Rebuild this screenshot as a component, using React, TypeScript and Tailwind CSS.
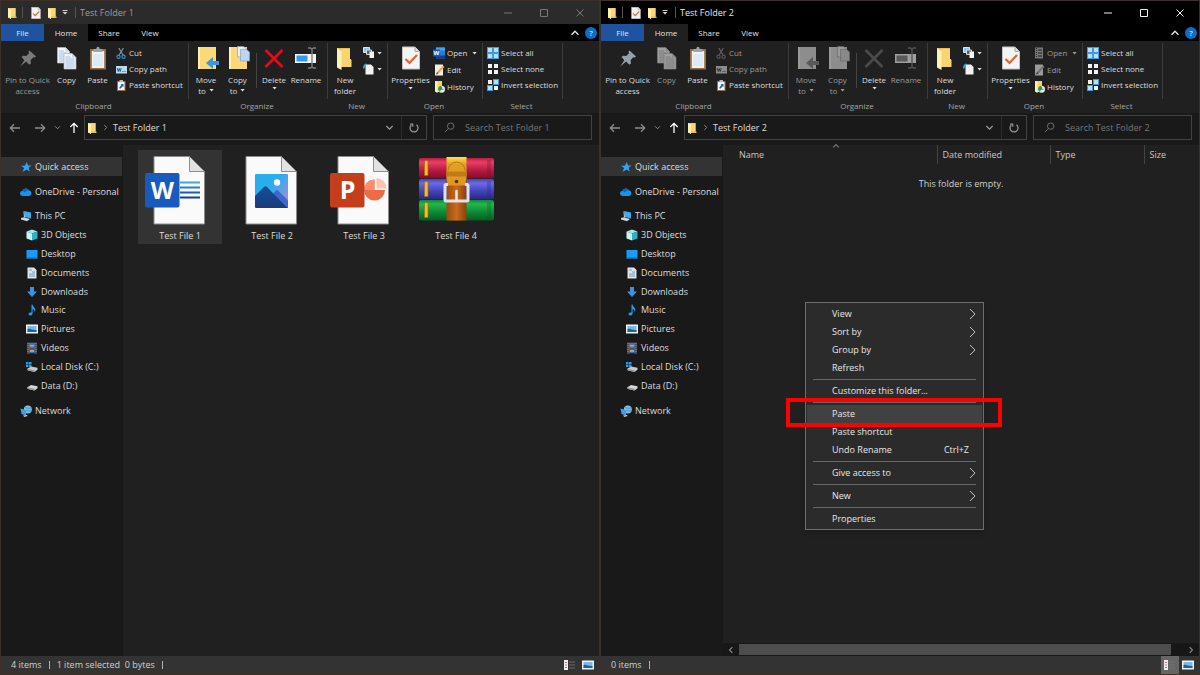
import { ReactNode } from 'react';
import clsx from 'clsx';

interface IconProps {
  className?: string;
}

interface ExplorerProps {
  title: string;
  active: boolean;
  hasSelection: boolean;
  status: string[];
  children: ReactNode;
}

/* ---------- Small icons ---------- */

const FolderIcon = ({ className = 'w-[10px] h-[12px]' }: IconProps) => (
  <svg viewBox="0 0 10 12" className={className}>
    <path d="M1 1h7.500v8.500h1V11H3.500L1 10.500z" fill="#e9bf55" />
    <path d="M1 1l3 1.200V12L1 10.600z" fill="#fff0b0" />
    <path d="M4 1.200h4.500v8.300H4z" fill="#fbd877" />
  </svg>
);

const CheckPageIcon = ({ className = 'w-[10px] h-[12px]' }: IconProps) => (
  <svg viewBox="0 0 18 23" className={className}>
    <path d="M.5.5H13l4.500 4.500v17.500H.5z" fill="#f4f4f4" stroke="#c4c4c4" />
    <path d="M13 .5V5h4.500" fill="#d8d8d8" stroke="#a8a8a8" />
    <path d="M3.500 12.500l4 4 7.500-8" fill="none" stroke="#e8632c" strokeWidth="2.200" />
  </svg>
);

const Caret = ({ className = '' }: IconProps) => (
  <svg viewBox="0 0 5 3" className={clsx('w-[5px] h-[3px] shrink-0', className)}>
    <path d="M.5 0h4.200L2.600 2.600z" fill="currentColor" />
  </svg>
);

const Chevron = ({ className = 'w-[10px] h-[10px]' }: IconProps) => (
  <svg viewBox="0 0 10 10" className={clsx('shrink-0', className)}>
    <path d="M1.500 3.300L5 6.800l3.500-3.500" fill="none" stroke="currentColor" strokeWidth="1.400" />
  </svg>
);

const ArrowIcon = ({ className = '' }: IconProps) => (
  <svg viewBox="0 0 12 12" className={clsx('w-[12px] h-[12px] shrink-0', className)}>
    <path d="M11 6H1.500M5 2.300L1.300 6 5 9.700" fill="none" stroke="currentColor" strokeWidth="1.300" />
  </svg>
);

/* ---------- Ribbon icons, large ---------- */

const PinIcon = () => (
  <svg viewBox="0 0 18 24" className="w-[18px] h-[24px]">
    <path d="M10.500 4.500l6.500 6-1.800 1.200-1-.4-2.600 3 .3 3.200-1.600 1.200-3.200-3.200L1.300 20.500l4-6.200L2.500 11l1.700-1.200 3 .2 3-2.900-.9-1z" fill="currentColor" />
  </svg>
);

const Sheet = ({ x, y }: { x: number; y: number }) => (
  <g transform={`translate(${x} ${y})`}>
    <path d="M.5.5h8l4 4v11.500H.5z" fill="#f2f5fa" stroke="#b4bac4" strokeWidth=".7" />
    <path d="M8.500.5v4h4" fill="#cfd6e2" />
    <path d="M2 6h9M2 8h9M2 10h9M2 12h9M2 14h9M2 4h5" stroke="#8fb4e0" strokeWidth=".8" />
  </g>
);

const CopyIcon = () => (
  <svg viewBox="0 0 20 24" className="w-[20px] h-[24px]">
    <Sheet x={0} y={1} />
    <Sheet x={6.500} y={7} />
  </svg>
);

const PasteIcon = () => (
  <svg viewBox="0 0 18 24" className="w-[18px] h-[24px]">
    <path d="M1 3h16v20.500H1z" fill="#9a6b40" />
    <path d="M2.800 5h12.400v17H2.800z" fill="#eef3f8" />
    <path d="M4 9h10M4 11h10M4 13h10M4 15h10M4 17h10M4 19h10" stroke="#c7dbef" strokeWidth=".8" />
    <path d="M4.500 3h2.700L8 1h2l.8 2h2.700v3h-9z" fill="#9fa4a8" />
  </svg>
);

const MoveToIcon = () => (
  <svg viewBox="-4 0 25 24" className="w-[25px] h-[24px]">
    <path d="M0 1h18v22H0z" fill="#fcd978" />
    <path d="M0 1h2v22H0z" fill="#fff0b4" />
    <path d="M21 15v4h-6v4l-7-6 7-6v4z" fill="#3a97e4" />
  </svg>
);

const CopyToIcon = () => (
  <svg viewBox="-4 0 25 24" className="w-[25px] h-[24px]">
    <path d="M0 1h18v22H0z" fill="#fcd978" />
    <path d="M0 1h2v22H0z" fill="#fff0b4" />
    <path d="M8.500.4h6l3 2.600v8h-9z" fill="#e8f0fa" stroke="#8ea0b8" strokeWidth=".7" />
    <path d="M11.500 3.400h6l3 2.600v9h-9z" fill="#bcd6f6" stroke="#8ea0b8" strokeWidth=".7" />
  </svg>
);

const DeleteIcon = () => (
  <svg viewBox="0 0 20 24" className="w-[20px] h-[24px]">
    <path d="M1.500 4l17 17M18.500 4l-17 17" stroke="currentColor" strokeWidth="2.800" />
  </svg>
);

const RenameIcon = () => (
  <svg viewBox="0 0 24 24" className="w-[24px] h-[24px]">
    <path d="M1 8h21v9H1z" fill="#f3f3f3" />
    <path d="M2.500 9.500h11v6h-11z" fill="#3399ea" />
    <path d="M14 2h2.500l1.500 1 1.500-1H22M18 3v18M14 22h2.500l1.500-1 1.500 1H22" fill="none" stroke="#808080" strokeWidth="1.400" />
  </svg>
);

const NewFolderIcon = () => (
  <svg viewBox="0 0 16 24" className="w-[16px] h-[24px]">
    <path d="M0 2h13v11h1v8H5l-4 1z" fill="#e8bd58" />
    <path d="M4 3h9v10l1.500 1v7H4z" fill="#fad471" />
    <path d="M0 2l4.500 3v19L0 21.500z" fill="#fff0b4" />
  </svg>
);

/* ---------- Ribbon icons, small ---------- */

const small = 'w-[11px] h-[11px] shrink-0';

const CutIcon = () => (
  <svg viewBox="0 0 11 11" className={small}>
    <path d="M2.800 0l4.500 7.500M7.400 0L2.900 7.500" stroke="#8b98a4" strokeWidth="1.100" />
    <circle cx="2.500" cy="8.800" r="1.600" fill="none" stroke="#2b8fd6" strokeWidth="1.200" />
    <circle cx="7.600" cy="8.800" r="1.600" fill="none" stroke="#2b8fd6" strokeWidth="1.200" />
  </svg>
);

const CopyPathIcon = () => (
  <svg viewBox="0 0 11 11" className={small}>
    <path d="M0 2h11v7.500H0z" fill="#b6dcf6" />
    <path d="M1.200 4l1 3.500 1-3 1 3 1-3.500M6.500 7.500h1M8.500 7.500h1" fill="none" stroke="#20506e" strokeWidth=".9" />
  </svg>
);

const PasteShortcutIcon = () => (
  <svg viewBox="0 0 11 11" className={small}>
    <path d="M1 1h8.500v10H1z" fill="#9a6b40" />
    <path d="M2 2h6.500v8H2z" fill="#f5f8fb" />
    <path d="M3.500 0H7v2H3.500z" fill="#b5b9bd" />
    <path d="M3.500 8.500V7l2-2-.8-.9h2.800V7l-.8-.7-2 2.200z" fill="#2563b0" />
  </svg>
);

const EasyAccessIcon = () => (
  <svg viewBox="0 0 12 12" className="w-[12px] h-[12px] shrink-0">
    <path d="M.5.5h6v5h-6z" fill="#8bc4ee" stroke="#d5e7f5" />
    <path d="M3.500 3h5v4.500h-5z" fill="#55616e" stroke="#d8dde2" />
    <path d="M6.500 4.500H11V11H6.500z" fill="#f4f6f8" />
  </svg>
);

const NewItemIcon = () => (
  <svg viewBox="0 0 12 12" className="w-[12px] h-[12px] shrink-0">
    <path d="M2.500 1.500H8L10.500 4v7.500h-8z" fill="#f2f2f2" />
    <path d="M0 5.500c0-3 1-4.500 3.500-5l.5 1.300C2.500 2.500 1.700 3.500 1.700 5.500z" fill="#469de0" />
  </svg>
);

const WordSmallIcon = () => (
  <svg viewBox="0 0 12 12" className="w-[12px] h-[12px] shrink-0">
    <path d="M3 .5h9v11H3z" fill="#2b7cd3" />
    <path d="M3 .5h9v3H3z" fill="#41a5ee" />
    <path d="M3 8.500h9v3H3z" fill="#103f91" />
    <path d="M0 2.500h7v7H0z" fill="#185abd" />
    <text x="3.500" y="8.200" fontSize="6" fontWeight="700" textAnchor="middle" fill="#fff">W</text>
  </svg>
);

const GenericOpenIcon = () => (
  <svg viewBox="0 0 12 12" className="w-[12px] h-[12px] shrink-0">
    <path d="M2 .5h8v11H2z" fill="#b8b8b8" />
    <path d="M3.500 1v10.500" stroke="#333" strokeDasharray="1 1" />
    <path d="M5 2h4v2H5zM5 5h4v2H5zM5 8h4v2H5z" fill="#707070" />
  </svg>
);

const EditIcon = () => (
  <svg viewBox="0 0 12 12" className="w-[12px] h-[12px] shrink-0">
    <path d="M2 .5h8v11H2z" fill="#eeeeee" />
    <path d="M3 10.500L4 8l6-6.500L11.500 3l-6 6.500z" fill="#e8ad36" />
    <path d="M3 10.500L4 8l1.500 1.500z" fill="#555" />
  </svg>
);

const HistoryIcon = () => (
  <svg viewBox="0 0 12 12" className="w-[12px] h-[12px] shrink-0">
    <path d="M2 0h7v11H4l-2-1z" fill="#f7d36e" />
    <path d="M2 0l2.500 1v11L2 10.500z" fill="#fff0b4" />
    <circle cx="8.500" cy="8.300" r="3.500" fill="#e5e9e5" />
    <path d="M5 8.300a3.500 3.500 0 013.500-3.500v3.500L6.500 11z" fill="#3a9b45" />
    <path d="M8.500 6v2.300h2" fill="none" stroke="#4a5a4a" strokeWidth=".7" />
  </svg>
);

const SelectIcon = ({ on }: { on: boolean[] }) => (
  <svg viewBox="0 0 12 12" className="w-[12px] h-[12px] shrink-0">
    {on.map((lit, i) => (
      <g key={i} transform={`translate(${(i % 2) * 6} ${Math.floor(i / 2) * 6})`}>
        {lit && <rect width="6" height="6" fill="#3d9be0" />}
        <rect x="1" y="1" width="4" height="4" fill={lit ? '#b9def8' : '#f2f2f2'} />
      </g>
    ))}
  </svg>
);

/* ---------- Navigation pane icons ---------- */

const nav = 'w-[12px] h-[12px] shrink-0';

const navIcons: Record<string, ReactNode> = {
  star: (
    <svg viewBox="0 0 12 12" className={nav}>
      <path d="M6.800 1l1.200 3.600h3.500L8.700 6.800l1 3.700-3.200-2.100L2.500 11l1.600-4L1 4.800l3.900-.1z" fill="#36a3f0" />
    </svg>
  ),
  cloud: (
    <svg viewBox="0 0 12 12" className={nav}>
      <path d="M2.600 10a2.500 2.500 0 01-.2-5A3.700 3.700 0 019 4.200 3 3 0 019.400 10z" fill="#1a94e6" />
      <path d="M2.400 5A3.700 3.700 0 019 4.200Q6 4.500 4.800 6.500 4 5 2.400 5z" fill="#0d66b8" />
    </svg>
  ),
  pc: (
    <svg viewBox="0 0 12 12" className={nav}>
      <path d="M4 1l7 1.500v6L5 7z" fill="#3fa9f2" />
      <path d="M4 1l1 6-1 .8L3.500 2z" fill="#b9dff8" />
      <path d="M1 8l3-.8 6 1.800-3 2.200L1 9.500z" fill="#cdd3d8" />
    </svg>
  ),
  cube: (
    <svg viewBox="0 0 12 12" className={nav}>
      <path d="M6 .5l5.500 2L6 4.500.5 2.500z" fill="#9ceaf0" />
      <path d="M.5 2.500L6 4.500v7L.5 9.500z" fill="#c7f4f5" />
      <path d="M11.500 2.500L6 4.500v7l5.500-2z" fill="#2bb3c6" />
    </svg>
  ),
  desktop: (
    <svg viewBox="0 0 12 12" className={nav}>
      <path d="M.5 2h11v8.500H.5z" fill="#1b9bf5" />
      <path d="M.5 9.500h11v1H.5z" fill="#0b6fc0" />
    </svg>
  ),
  doc: (
    <svg viewBox="0 0 12 12" className={nav}>
      <path d="M1.500.5H8L10.500 3v8.500h-9z" fill="#dfe4e8" />
      <path d="M3 3h3M6 5h3M3 7h6M3 9h6" stroke="#5f9ccc" strokeWidth=".9" />
    </svg>
  ),
  down: (
    <svg viewBox="0 0 12 12" className={nav}>
      <path d="M4 1h4v4.500h3L6 11 1 5.500h3z" fill="#3a93e2" />
    </svg>
  ),
  music: (
    <svg viewBox="0 0 12 12" className={nav}>
      <path d="M5.500.5h1c.2 2 2.700 2.700 2.700 5.200 0 .9-.3 1.600-.8 2.200C8.700 6.200 7.600 5.200 6.600 4.900v4.600c0 1.200-1 2-2.300 2-1 0-1.800-.5-1.800-1.400C2.500 8.800 4 8.300 5.500 8.600z" fill="#1f9df0" />
    </svg>
  ),
  picture: (
    <svg viewBox="0 0 12 12" className={nav}>
      <path d="M0 1.500h12v9H0z" fill="#eef2f5" />
      <path d="M1.500 3h9v6h-9z" fill="#79b9ec" />
      <path d="M1.500 6c3-1 5 1.500 9 1v2h-9z" fill="#25628c" />
    </svg>
  ),
  video: (
    <svg viewBox="0 0 12 12" className={nav}>
      <path d="M1 .5h10v11H1z" fill="#4c4c50" />
      <path d="M3 1h6v4.700H3z" fill="#3f6fd0" />
      <path d="M3 6.300h6V11H3z" fill="#3862ba" />
      <path d="M4 3h4v1.700H4zM4 8h4v2H4z" fill="#d69b43" />
      <path d="M2 1v10.500M10 1v10.500" stroke="#aaa" strokeWidth=".8" strokeDasharray="1 1" />
    </svg>
  ),
  diskC: (
    <svg viewBox="0 0 12 12" className={nav}>
      <path d="M0 1h2.500v2.200H0zM3 1h2.500v2.200H3zM0 3.700h2.500v2.200H0zM3 3.700h2.500v2.200H3z" fill="#1ea0ea" />
      <path d="M1 8l4-2.500 6.500 1.300v2L8.500 11 2 9.600z" fill="#c7cacc" />
      <path d="M1 8l7.500 1.300V11L2 9.600z" fill="#8f9395" />
    </svg>
  ),
  disk: (
    <svg viewBox="0 0 12 12" className={nav}>
      <path d="M1 7.500L5 5l6.500 1.300v2L8.500 10.500 2 9.100z" fill="#d2d4d6" />
      <path d="M1 7.500l7.500 1.300v1.700L2 9.100z" fill="#8f9395" />
    </svg>
  ),
  network: (
    <svg viewBox="0 0 12 12" className={nav}>
      <circle cx="7.800" cy="4.500" r="4" fill="#7fc0e6" />
      <path d="M5 2c2 2 4 1 6 1M4.500 6c2-1 5 1 6.800-.5" fill="none" stroke="#3c85b5" strokeWidth=".8" />
      <path d="M.5 3.500L6 5v5.500L1.500 9z" fill="#37a3ee" />
      <path d="M3 10.500l4-.5.500 1-3 1z" fill="#c5cbd0" />
    </svg>
  ),
};

/* ---------- File thumbnails ---------- */

const Page = () => (
  <>
    <path d="M16 6.500h35.500l15 15v52.500H16z" fill="#fafafa" stroke="#8c8c8c" />
    <path d="M51.500 6.500v15h15z" fill="#e2e2e2" stroke="#8c8c8c" />
  </>
);

const thumb = 'w-[84px] h-[76px]';

const WordFile = () => (
  <svg viewBox="0 0 84 76" className={thumb}>
    <Page />
    <path d="M42 32.500h20" stroke="#41a5ee" strokeWidth="2" />
    <path d="M42 37.500h20" stroke="#2b7cd3" strokeWidth="2" />
    <path d="M42 42.500h20" stroke="#185abd" strokeWidth="2" />
    <path d="M42 47.500h20" stroke="#103f91" strokeWidth="2" />
    <rect x="7" y="23" width="34.500" height="34.500" rx="2" fill="#185abd" />
    <text x="24.300" y="49.300" fontSize="24" fontWeight="700" textAnchor="middle" fill="#fff">W</text>
  </svg>
);

const PictureFile = () => (
  <svg viewBox="0 0 84 76" className={thumb}>
    <defs>
      <linearGradient id="sky" x1="0" y1="0" x2="1" y2="1">
        <stop offset=".4" stopColor="#28aeea" />
        <stop offset=".9" stopColor="#a78be0" />
      </linearGradient>
      <linearGradient id="hill" x1="0" y1="0" x2="0" y2="1">
        <stop offset="0" stopColor="#11509a" />
        <stop offset="1" stopColor="#1c3a78" />
      </linearGradient>
    </defs>
    <Page />
    <rect x="25" y="24" width="33" height="34" rx="1" fill="url(#sky)" />
    <path d="M40 47l6-6.500q1-1 2 0l10 10v7.500H42z" fill="#3e68cc" />
    <path d="M25 46l9-9q1.500-1.500 3 0l20.500 21H26l-1-1z" fill="url(#hill)" />
    <circle cx="47" cy="32.500" r="3.200" fill="#fff" />
  </svg>
);

const SlidesFile = () => (
  <svg viewBox="0 0 84 76" className={thumb}>
    <Page />
    <path d="M52.500 29.500v10.500h10.500A10.500 10.500 0 1152.500 29.500z" fill="#ed6c47" />
    <path d="M52.500 29.500v10.500H42a10.500 10.500 0 0110.500-10.500z" fill="#ff8f6b" />
    <path d="M54.500 28a10.500 10.500 0 0110 10.500h-10z" fill="#ffc2b0" />
    <rect x="8" y="23" width="34.500" height="34.500" rx="2" fill="#c43e1c" />
    <text x="25.500" y="49.300" fontSize="25" fontWeight="700" textAnchor="middle" fill="#fff">P</text>
  </svg>
);

const books = [
  { y: 8, id: 'red', top: '#ea3f66', mid: '#b81a40', low: '#7a0f2b' },
  { y: 29, id: 'blue', top: '#6a6ae6', mid: '#4343b8', low: '#28287c' },
  { y: 50, id: 'green', top: '#25b64b', mid: '#0e8a34', low: '#075c22' },
];

const ArchiveFile = () => (
  <svg viewBox="0 0 84 76" className={thumb}>
    <defs>
      {books.map((b) => (
        <linearGradient key={b.id} id={b.id} x1="0" y1="0" x2="0" y2="1">
          <stop offset="0" stopColor={b.mid} />
          <stop offset=".2" stopColor={b.top} />
          <stop offset=".6" stopColor={b.mid} />
          <stop offset="1" stopColor={b.low} />
        </linearGradient>
      ))}
      <linearGradient id="strap" x1="0" y1="0" x2="1" y2="0">
        <stop offset="0" stopColor="#9a4a10" />
        <stop offset=".5" stopColor="#c96a1c" />
        <stop offset="1" stopColor="#8c400c" />
      </linearGradient>
      <linearGradient id="gold" x1="0" y1="0" x2="0" y2="1">
        <stop offset="0" stopColor="#ffe24c" />
        <stop offset=".25" stopColor="#e0a024" />
        <stop offset="1" stopColor="#dd9626" />
      </linearGradient>
    </defs>
    {books.map((b) => (
      <g key={b.id}>
        <rect x="5" y={b.y} width="75" height="20.500" rx="2" fill={`url(#${b.id})`} />
        <path d={`M10.500 ${b.y + 3}q2-1 3.500 0v14.500h-3.500z`} fill="#f4bd22" stroke="#a3660c" strokeWidth=".6" />
        <path d={`M74 ${b.y + 2}v17M76 ${b.y + 2}v17`} stroke={b.low} strokeWidth=".6" />
      </g>
    ))}
    <path d="M32.500 49h20v21.500h-20z" fill="url(#strap)" />
    <path d="M32.500 28h20v22h-20z" fill="url(#strap)" />
    <path d="M32.500 7h20v21l-1.500 7.500H34L32.500 28z" fill="url(#gold)" />
    <path d="M32.500 21.500h20v5h-20z" fill="#c07b18" />
    <path d="M34 20.500a8.500 8.500 0 0117 0" fill="none" stroke="#a86b12" strokeWidth=".8" />
    <circle cx="42.500" cy="31.500" r="1.800" fill="#5c3208" />
    <path d="M34 34.500h-2q-1 0-1 1V50q0 1 1 1h21q1 0 1-1V35.500q0-1-1-1h-2" fill="none" stroke="#dfe1ea" strokeWidth="3" />
    <path d="M42.500 41v9" stroke="#e5e8ec" strokeWidth="2.500" strokeLinecap="round" />
  </svg>
);

/* ---------- Ribbon ---------- */

interface ButtonProps {
  icon: ReactNode;
  label: string;
  width?: string;
  disabled?: boolean;
  dim?: boolean;
  caret?: 'inline' | 'below';
}

const tone = (dim?: boolean) => (dim ? 'text-[#9b9b9b]' : 'text-[#dedede]');

const BigButton = ({ icon, label, width, disabled, dim, caret }: ButtonProps) => {
  const lines = label.split('|');
  return (
    <button disabled={disabled} className={clsx('flex flex-col items-center pt-[5px] leading-[11px] whitespace-nowrap shrink-0', width, tone(disabled || dim))}>
      <span className={clsx('block mb-[4px]', disabled && 'grayscale brightness-[.65]')}>{icon}</span>
      <span>{lines[0]}</span>
      {lines[1] && (
        <span className="flex items-center gap-[3px]">
          {lines[1]}
          {caret === 'inline' && <Caret />}
        </span>
      )}
      {caret === 'below' && <Caret className="mt-[2px]" />}
    </button>
  );
};

const SmallButton = ({ icon, label, disabled, caret }: ButtonProps) => (
  <button disabled={disabled} className={clsx('flex items-center gap-[2px] h-4 whitespace-nowrap', tone(disabled))}>
    <span className={clsx(disabled && 'grayscale brightness-[.65]')}>{icon}</span>
    {label}
    {caret && <Caret className={label ? 'ml-[2px]' : ''} />}
  </button>
);

const Group = ({ name, width, children }: { name: string; width: string; children: ReactNode }) => (
  <div className={clsx('flex shrink-0', width)}>
    <div className="flex flex-col flex-1 min-w-0">
      <div className="flex h-[58px]">{children}</div>
      <div className="pr-[2px] text-center leading-[13px] text-[#a6a6a6]">{name}</div>
    </div>
    <div className="w-px h-14 mt-[2px] bg-[#3c3c3c]" />
  </div>
);

const Ribbon = ({ hasSelection }: { hasSelection: boolean }) => {
  const off = !hasSelection;
  return (
    <div className="flex h-[72px] bg-[#202020] text-[8px] overflow-hidden">
      <Group name="Clipboard" width="w-[188px]">
        <BigButton
          icon={<span className={hasSelection ? 'text-[#7b7b7b]' : 'text-[#93a1ad]'}><PinIcon /></span>}
          label="Pin to Quick|access"
          width="w-[53px]"
          dim={hasSelection}
        />
        <BigButton icon={<CopyIcon />} label="Copy" width="w-[25px]" disabled={off} />
        <BigButton icon={<PasteIcon />} label="Paste" width="w-[37px]" />
        <div className="pt-[4px]">
          <SmallButton icon={<CutIcon />} label="Cut" disabled={off} />
          <SmallButton icon={<CopyPathIcon />} label="Copy path" disabled={off} />
          <SmallButton icon={<PasteShortcutIcon />} label="Paste shortcut" />
        </div>
      </Group>
      <Group name="Organize" width="w-[139px]">
        <BigButton icon={<MoveToIcon />} label="Move|to" width="w-[34px]" disabled={off} caret="inline" />
        <BigButton icon={<CopyToIcon />} label="Copy|to" width="w-[29px]" disabled={off} caret="inline" />
        <div className="w-px h-[35px] mt-[12px] ml-[4px] bg-[#444]" />
        <BigButton icon={<span className={off ? 'text-[#4a4a4a]' : 'text-[#e30b17]'}><DeleteIcon /></span>} label="Delete" width="w-[34px]" caret="below" />
        <BigButton icon={<RenameIcon />} label="Rename" width="w-[30px]" disabled={off} />
      </Group>
      <Group name="New" width="w-[60px]">
        <BigButton icon={<NewFolderIcon />} label="New|folder" width="w-[34px]" />
        <div className="pt-[4px] pl-px">
          <SmallButton icon={<EasyAccessIcon />} label="" caret="inline" />
          <SmallButton icon={<NewItemIcon />} label="" caret="inline" />
        </div>
      </Group>
      <Group name="Open" width="w-[95px]">
        <BigButton icon={<CheckPageIcon className="w-[18px] h-[24px]" />} label="Properties" width="w-[45px]" caret="below" />
        <div className="flex flex-col gap-px pt-[4px]">
          <SmallButton icon={hasSelection ? <WordSmallIcon /> : <GenericOpenIcon />} label="Open" disabled={off} caret="inline" />
          <SmallButton icon={<EditIcon />} label="Edit" disabled={off} />
          <SmallButton icon={<HistoryIcon />} label="History" />
        </div>
      </Group>
      <Group name="Select" width="w-[80px]">
        <div className="pt-[4px] pl-[4px]">
          <SmallButton icon={<SelectIcon on={[true, true, true, true]} />} label="Select all" />
          <SmallButton icon={<SelectIcon on={[false, false, false, false]} />} label="Select none" />
          <SmallButton icon={<SelectIcon on={[false, true, true, false]} />} label="Invert selection" />
        </div>
      </Group>
    </div>
  );
};

/* ---------- Window parts ---------- */

const TitleBar = ({ title, active }: { title: string; active: boolean }) => (
  <div className={clsx('flex items-center h-[23px] pl-[6px]', active ? 'bg-black text-[#e6e6e6]' : 'bg-[#2b2b2b] text-[#9c9c9c]')}>
    <FolderIcon />
    <span className="w-px h-[11px] ml-[5px] bg-[#555]" />
    <CheckPageIcon className="w-[10px] h-[12px] ml-[8px]" />
    <FolderIcon className="w-[10px] h-[12px] ml-[6px]" />
    <svg viewBox="0 0 6 5" className="w-[6px] h-[5px] ml-[5px] text-[#d0d0d0]">
      <path d="M.5 0h5v1h-5zM.5 2h5L3 4.500z" fill="currentColor" />
    </svg>
    <span className="w-px h-[11px] ml-[7px] bg-[#555]" />
    <h1 className="ml-[4px]">{title}</h1>
    <div className={clsx('flex ml-auto', active ? 'text-[#f0f0f0]' : 'text-[#777]')}>
      {['M1 5h8', 'M1.500 1.500h7v7h-7z', 'M1.500 1.500l7 7M8.500 1.500l-7 7'].map((d, i) => (
        <button key={d} aria-label={['Minimize', 'Maximize', 'Close'][i]} className="flex justify-center w-9">
          <svg viewBox="0 0 10 10" className="w-[10px] h-[10px]">
            <path d={d} fill="none" stroke="currentColor" />
          </svg>
        </button>
      ))}
      <span className="w-px" />
    </div>
  </div>
);

const Tabs = () => (
  <div className="flex h-[17px] bg-black text-[8px] text-[#e0e0e0]">
    <button className="w-[43px] bg-[#20539f]">File</button>
    <button className="w-[44px] bg-[#202020]">Home</button>
    <button className="w-[42px]">Share</button>
    <button className="w-[40px]">View</button>
    <div className="flex items-center gap-[5px] ml-auto pr-[2px]">
      <button aria-label="Collapse ribbon"><Chevron className="rotate-180 w-[10px] h-[10px]" /></button>
      <button aria-label="Help" className="w-3 h-3 rounded-full bg-[#0a6fc9] text-white leading-3">?</button>
    </div>
  </div>
);

const AddressBar = ({ title }: { title: string }) => (
  <div className="flex pt-[2px] pb-[5px] pr-[7px] bg-[#191919]">
    <div className="flex items-center w-[83px] pl-[8px] text-[#8c8c8c]">
      <button aria-label="Back"><ArrowIcon /></button>
      <button aria-label="Forward" className="ml-[13px]"><ArrowIcon className="rotate-180" /></button>
      <button aria-label="Recent locations" className="ml-[8px]"><Chevron className="w-[7px] h-[7px]" /></button>
      <button aria-label="Up" className="ml-[7px] text-white"><ArrowIcon className="rotate-90" /></button>
    </div>
    <div className="flex items-center flex-1 h-[25px] pl-[2px] border border-[#434343] text-[#dedede]">
      <FolderIcon />
      <Chevron className="-rotate-90 w-[7px] h-[7px] ml-[5px] text-[#8a8a8a]" />
      <span className="ml-[4px]">{title}</span>
      <button aria-label="Previous locations" className="ml-auto mr-[7px] text-[#999]"><Chevron className="w-[9px] h-[9px]" /></button>
      <button aria-label="Refresh" className="flex items-center justify-center w-[25px] h-full border-l border-[#2c2c2c] text-[#9a9a9a]">
        <svg viewBox="0 0 12 12" className="w-[12px] h-[12px]">
          <path d="M8.500 2.800A4 4 0 113.300 3M2 2h2.700v2.700" fill="none" stroke="currentColor" strokeWidth="1.200" />
        </svg>
      </button>
    </div>
    <label className="flex items-center w-[159px] ml-[6px] pl-[10px] gap-[10px] border border-[#434343] text-[#777]">
      <svg viewBox="0 0 12 12" className="w-[11px] h-[11px] shrink-0">
        <circle cx="7.300" cy="4.500" r="3.500" fill="none" stroke="currentColor" />
        <path d="M4.700 7.200L1 11" stroke="currentColor" />
      </svg>
      <input aria-label="Search" placeholder={`Search ${title}`} className="min-w-0 flex-1 bg-transparent outline-none placeholder:text-[#777]" />
    </label>
  </div>
);

const thisPC = [
  ['cube', '3D Objects'],
  ['desktop', 'Desktop'],
  ['doc', 'Documents'],
  ['down', 'Downloads'],
  ['music', 'Music'],
  ['picture', 'Pictures'],
  ['video', 'Videos'],
  ['diskC', 'Local Disk (C:)'],
  ['disk', 'Data (D:)'],
];

const NavRow = ({ icon, label, className }: { icon: string; label: string; className: string }) => (
  <a href="#" className={clsx('flex items-center gap-[3px] whitespace-nowrap', className)}>
    {navIcons[icon]}
    {label}
  </a>
);

const Sidebar = () => (
  <nav className="w-[122px] shrink-0 pt-[12px] bg-[#191919] text-[#dedede]">
    <NavRow icon="star" label="Quick access" className="h-[19px] mr-px pl-[19px] bg-[#333]" />
    <NavRow icon="cloud" label="OneDrive - Personal" className="h-[19px] mt-[6px] pl-[19px]" />
    <div className="flex flex-col h-[188px] mt-[6px]">
      <NavRow icon="pc" label="This PC" className="flex-1 pl-[19px]" />
      {thisPC.map(([icon, label]) => (
        <NavRow key={label} icon={icon} label={label} className="flex-1 pl-[25px]" />
      ))}
    </div>
    <NavRow icon="network" label="Network" className="h-[19px] mt-[6px] pl-[19px]" />
  </nav>
);

const StatusBar = ({ status, active }: { status: string[]; active: boolean }) => (
  <footer className="flex items-center h-[18px] pl-[10px] bg-[#333] text-[#d0d0d0]">
    {status.map((text) => (
      <span key={text} className="flex items-center whitespace-pre">
        {text}
        <span className="w-px h-2 mx-[7px] bg-[#b0b0b0]" />
      </span>
    ))}
    <div className="flex h-full ml-auto pr-[2px]">
      <button aria-label="Details view" className={clsx('flex items-center justify-center w-[18px]', active && 'bg-[#666]')}>
        <svg viewBox="0 0 12 10" className="w-[12px] h-[10px]">
          <path d="M0 0h4v10H0z" fill="#eee" />
          <path d="M1 2.500h2M1 7.500h2" stroke="#d2664f" />
          <path d="M1 5h2" stroke="#5b9bd5" />
          <path d="M5 2h6M5 5h6M5 8h6" stroke="#777" strokeWidth=".8" />
        </svg>
      </button>
      <button aria-label="Large icons view" className="flex items-center justify-center w-[18px]">{navIcons.picture}</button>
    </div>
  </footer>
);

const Explorer = ({ title, active, hasSelection, status, children }: ExplorerProps) => (
  <section className="flex flex-col min-w-0 m-px bg-[#202020]">
    <TitleBar title={title} active={active} />
    <Tabs />
    <Ribbon hasSelection={hasSelection} />
    <AddressBar title={title} />
    <div className="flex flex-1">
      <Sidebar />
      <main className="relative flex flex-col flex-1 min-w-0">{children}</main>
    </div>
    <StatusBar status={status} active={active} />
  </section>
);

/* ---------- Folder contents ---------- */

const files = [
  { name: 'Test File 1', icon: <WordFile />, selected: true },
  { name: 'Test File 2', icon: <PictureFile /> },
  { name: 'Test File 3', icon: <SlidesFile /> },
  { name: 'Test File 4', icon: <ArchiveFile /> },
];

const FileGrid = () => (
  <div className="flex flex-wrap gap-2 pt-[5px] pl-[15px]">
    {files.map((file) => (
      <button key={file.name} className={clsx('w-[84px] h-[94px] text-[#dedede]', file.selected && 'bg-[#333]')}>
        {file.icon}
        <span className="block leading-[20px]">{file.name}</span>
      </button>
    ))}
  </div>
);

const DetailsView = () => (
  <>
    <table className="w-full table-fixed text-left text-[#c8c8c8]">
      <thead>
        <tr className="h-[19px]">
          <th className="relative pl-4 font-normal border-r border-[#444]">
            Name
            <Chevron className="absolute -top-[3px] left-[109px] rotate-180 w-[8px] h-[8px] text-[#777]" />
          </th>
          <th className="w-[113px] pl-[5px] font-normal border-r border-[#444]">Date modified</th>
          <th className="w-[94px] pl-[5px] font-normal border-r border-[#444]">Type</th>
          <th className="w-[55px] pl-[5px] font-normal">Size</th>
        </tr>
      </thead>
    </table>
    <p className="mt-[12px] text-center leading-[15px] text-[#d0d0d0]">This folder is empty.</p>
    <div className="flex items-center h-[13px] mt-auto bg-[#171717] text-[#8a8a8a]">
      <button aria-label="Scroll left" className="flex justify-center w-4"><Chevron className="rotate-90 w-[8px] h-[8px]" /></button>
      <div className="flex-1 h-[11px] mr-[12px] bg-[#4d4d4d]" />
      <button aria-label="Scroll right" className="flex justify-center w-4"><Chevron className="-rotate-90 w-[8px] h-[8px]" /></button>
    </div>
  </>
);

const menu = [
  [{ label: 'View', sub: true }, { label: 'Sort by', sub: true }, { label: 'Group by', sub: true }, { label: 'Refresh' }],
  [{ label: 'Customize this folder...' }],
  [{ label: 'Paste', hot: true }, { label: 'Paste shortcut' }, { label: 'Undo Rename', keys: 'Ctrl+Z' }],
  [{ label: 'Give access to', sub: true }],
  [{ label: 'New', sub: true }],
  [{ label: 'Properties' }],
] as { label: string; sub?: boolean; hot?: boolean; keys?: string }[][];

const ContextMenu = () => (
  <div role="menu" className="absolute top-[157px] left-[82px] w-[179px] px-px pt-[2px] pb-px border border-[#6e6e6e] bg-[#2b2b2b] text-[#e8e8e8] shadow-md">
    {menu.map((items, i) => (
      <div key={items[0].label}>
        {i > 0 && <div className="h-px mx-[6px] my-[2px] bg-[#666]" />}
        {items.map((item) => (
          <button key={item.label} role="menuitem" className={clsx('relative flex items-center w-full h-[18px] pl-[25px] pr-[13px]', item.hot && 'bg-[#414141]')}>
            {item.label}
            {item.keys && <span className="ml-auto">{item.keys}</span>}
            {item.sub && (
              <svg viewBox="0 0 7 12" className="w-[7px] h-[12px] ml-auto -mr-[7px] text-[#c0c0c0]">
                <path d="M1 1l5 5-5 5" fill="none" stroke="currentColor" />
              </svg>
            )}
            {item.hot && <span className="absolute z-10 -top-[7px] -left-[21px] w-[216px] h-[29px] border-4 border-[#fe0000]" />}
          </button>
        ))}
      </div>
    ))}
  </div>
);

const App = () => (
  <div className="grid grid-cols-2 min-h-screen bg-[#3d3028] font-['Open_Sans','Noto_Sans',sans-serif] text-[9px] leading-[12px]">
    <Explorer title="Test Folder 1" active={false} hasSelection status={['4 items', '1 item selected  0 bytes']}>
      <FileGrid />
    </Explorer>
    <Explorer title="Test Folder 2" active hasSelection={false} status={['0 items']}>
      <DetailsView />
      <ContextMenu />
    </Explorer>
  </div>
);

export default App;
